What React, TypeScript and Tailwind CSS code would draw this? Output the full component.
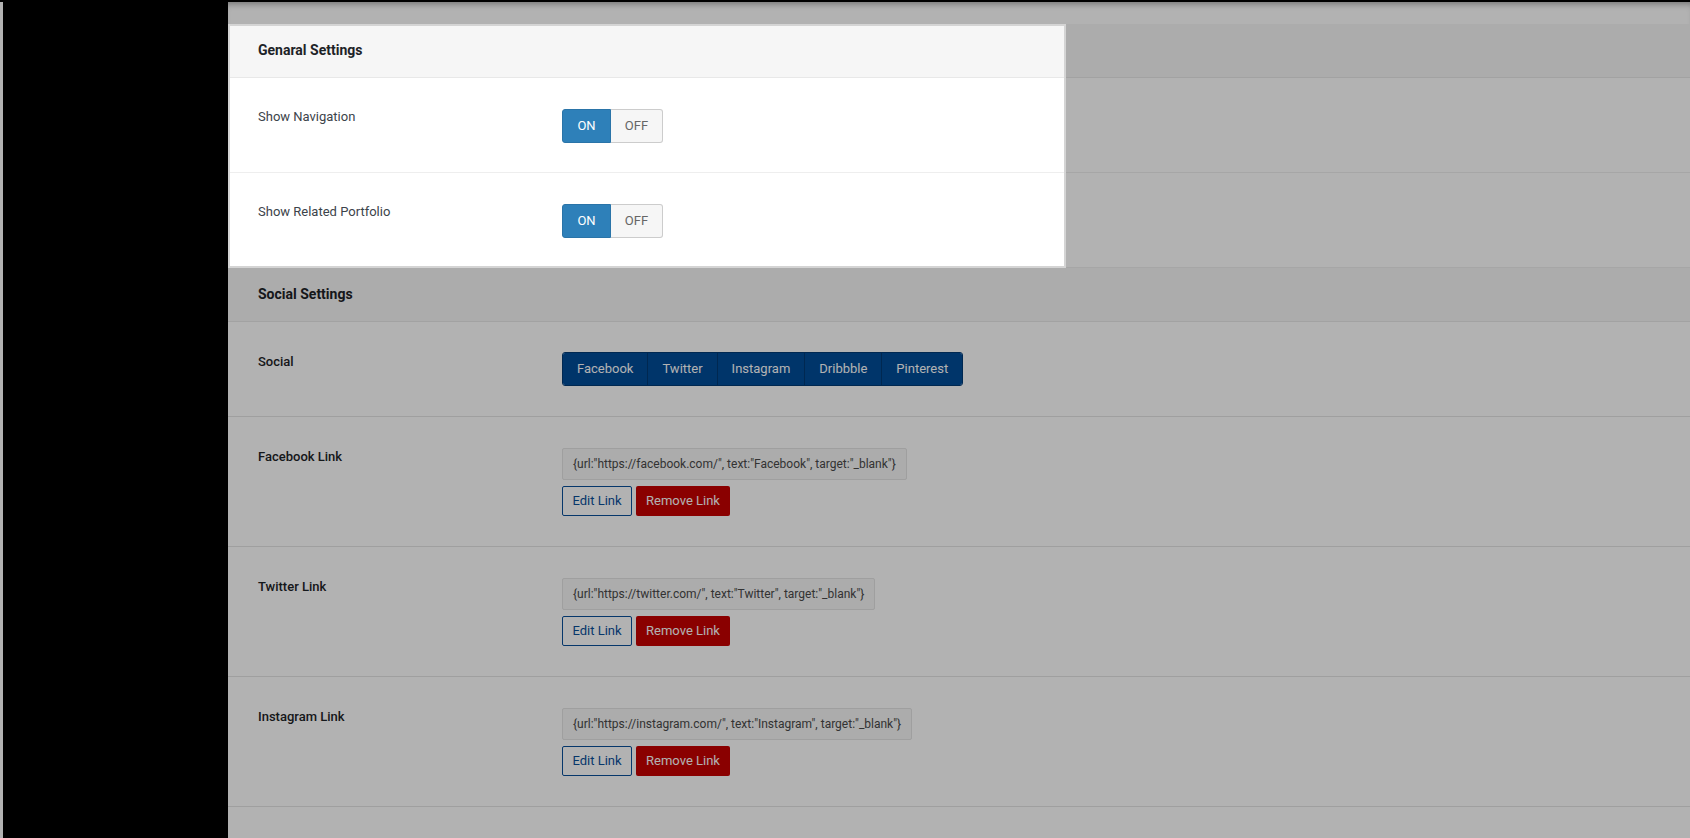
import React from 'react';

const labelCol = 'w-[334px] shrink-0 pl-[30px] text-[13px] leading-[18px]';

const Toggle: React.FC<{ on: boolean }> = ({ on }) => (
  <div className="flex h-[34px] w-[101px] text-[13px]">
    <button
      className={`w-[49px] rounded-l-[3px] border ${on ? 'border-[#2a74a8] bg-[#2e80b9] text-white' : 'border-[#ccc] bg-[#f6f6f6] text-[#666]'}`}
    >
      ON
    </button>
    <button
      className={`flex-1 rounded-r-[3px] border border-l-0 ${!on ? 'border-[#2a74a8] bg-[#2e80b9] text-white' : 'border-[#ccc] bg-[#f6f6f6] text-[#666]'}`}
    >
      OFF
    </button>
  </div>
);

const LinkField: React.FC<{ url: string; text: string }> = ({ url, text }) => (
  <div className="flex flex-col items-start gap-[6px]">
    <div className="flex h-[32px] items-center rounded-[2px] border border-[#e4e4e4] bg-[#f6f6f6] px-[10px] text-[12px] text-[#4a4a4a]">
      {`{url:"${url}", text:"${text}", target:"_blank"}`}
    </div>
    <div className="flex gap-[4px] text-[13px]">
      <button className="h-[30px] w-[70px] rounded-[2px] border border-[#0a4f9a] text-[#0a4f9a]">Edit Link</button>
      <button className="h-[30px] w-[94px] rounded-[2px] bg-[#c60000] text-white">Remove Link</button>
    </div>
  </div>
);

const SectionHeader: React.FC<{ title: string }> = ({ title }) => (
  <div className="flex h-[54px] items-center border-b border-[#e8e8e8] bg-[#f6f6f6] pl-[30px] text-[14px] font-bold text-[#1d2327]">
    {title}
  </div>
);

const App: React.FC = () => {
  const social = ['Facebook', 'Twitter', 'Instagram', 'Dribbble', 'Pinterest'];
  const links = [
    { label: 'Facebook Link', url: 'https://facebook.com/', text: 'Facebook' },
    { label: 'Twitter Link', url: 'https://twitter.com/', text: 'Twitter' },
    { label: 'Instagram Link', url: 'https://instagram.com/', text: 'Instagram' },
    { label: 'Dribbble Link', url: 'https://dribbble.com/', text: 'Dribbble' },
  ];

  return (
    <div className="flex h-screen flex-col overflow-hidden bg-white font-['Roboto',sans-serif]">
      {/* top bar */}
      <div className="h-[2px] shrink-0 bg-black" />
      <div className="flex min-h-0 flex-1">
        <div className="w-[3px] shrink-0 bg-white" />
        <div className="w-[225px] shrink-0 bg-black" />

        {/* Main */}
        <div className="min-w-0 flex-1 bg-white">
          <div className="h-[22px] shadow-[inset_0_6px_6px_-4px_rgba(0,0,0,0.35)]" />

          {/* General settings (highlighted) */}
          <div className="relative">
            <SectionHeader title="Genaral Settings" />
            {['Show Navigation', 'Show Related Portfolio'].map((l) => (
              <div key={l} className="flex border-b border-[#eee] pt-[30px] pb-[29px]">
                <div className={`${labelCol} text-[#3c434a]`}>{l}</div>
                <div className="pt-[1px]">
                  <Toggle on />
                </div>
              </div>
            ))}
            <div className="pointer-events-none absolute inset-y-0 left-0 z-10 w-[838px] border-2 border-[#d4d4d4] shadow-[0_0_0_9999px_rgba(0,0,0,0.3)]" />
          </div>

          {/* Social settings */}
          <SectionHeader title="Social Settings" />
          <div className="flex border-b border-[#e4e4e4] pt-[30px] pb-[30px]">
            <div className={`${labelCol} pt-[1px] font-medium text-[#1d2327]`}>Social</div>
            <div className="flex h-[34px] overflow-hidden rounded-[3px] border border-[#003a75] text-[13px] text-white">
              {social.map((s, i) => (
                <button key={s} className={`bg-[#004c99] px-[14px] ${i > 0 ? 'border-l border-[#003a75]' : ''}`}>
                  {s}
                </button>
              ))}
            </div>
          </div>
          {links.map((l) => (
            <div key={l.label} className="flex border-b border-[#e4e4e4] pt-[31px] pb-[30px]">
              <div className={`${labelCol} font-medium text-[#1d2327]`}>{l.label}</div>
              <LinkField url={l.url} text={l.text} />
            </div>
          ))}
        </div>
      </div>
    </div>
  );
};

export default App;
